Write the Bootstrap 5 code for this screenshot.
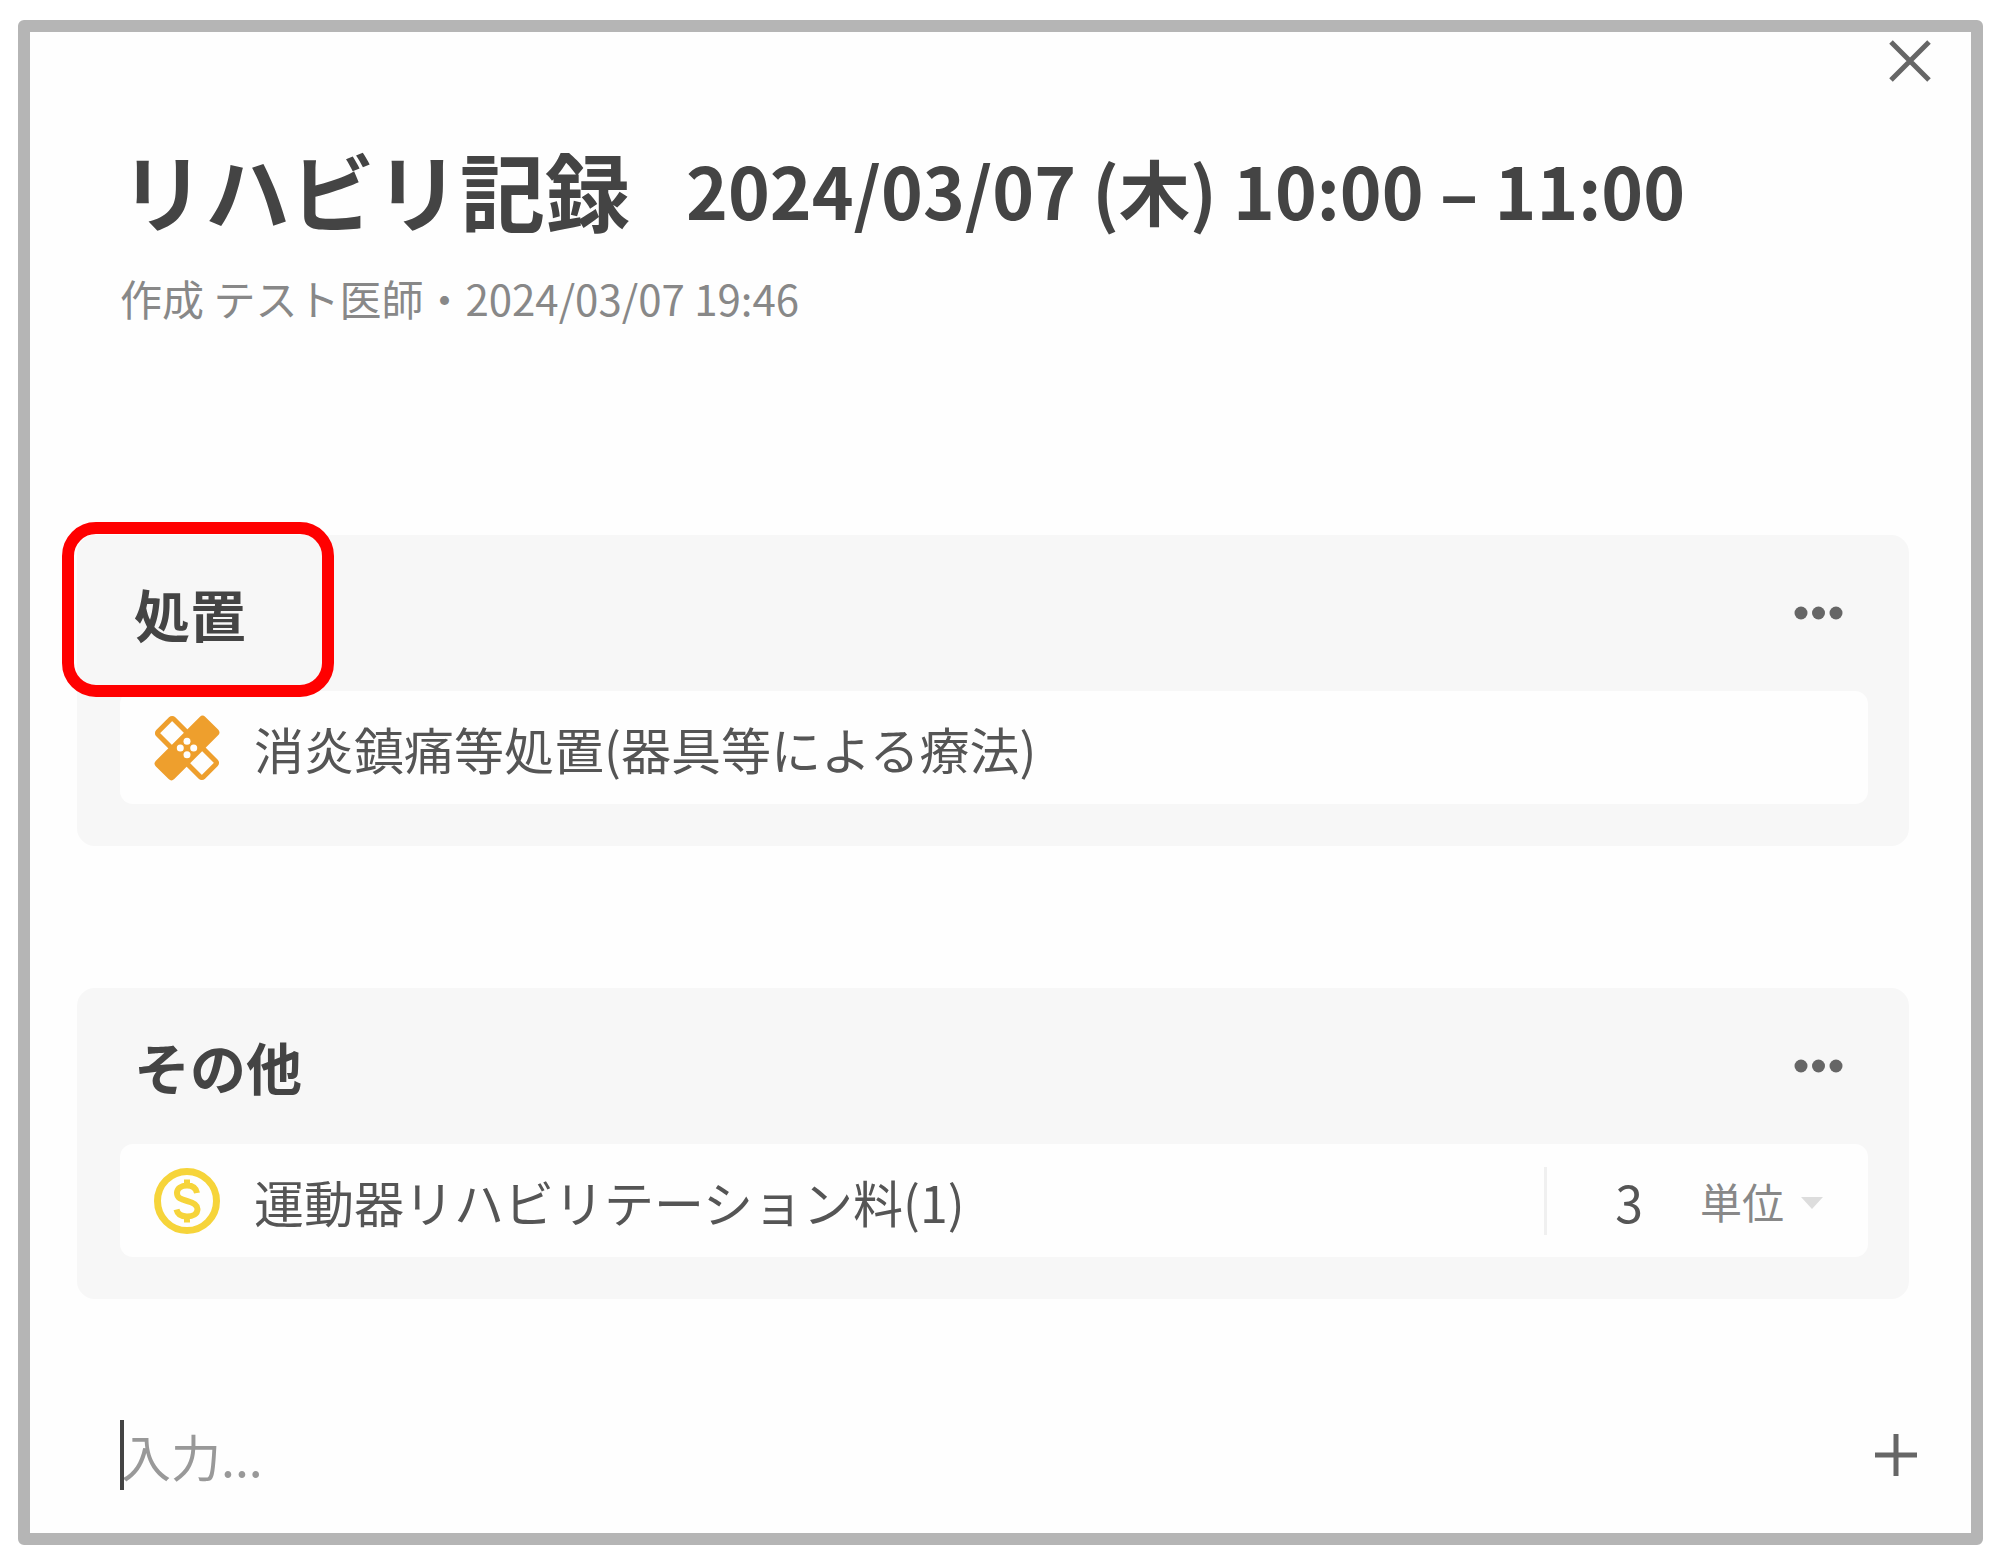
<!DOCTYPE html>
<html lang="ja">
<head>
<meta charset="utf-8">
<meta name="viewport" content="width=device-width, initial-scale=1">
<title>リハビリ記録</title>
<link href="https://cdn.jsdelivr.net/npm/bootstrap@5.3.0/dist/css/bootstrap.min.css" rel="stylesheet">
<style>
  body { font-family: "Noto Sans CJK JP", sans-serif; color: #444; background: #fff; padding: 20px 17px 18px 18px; }
  .record-frame { border: 12px solid #b5b5b5; border-radius: 6px; background: #fefefe; padding: 0 62px 43px 47px; }
  .icon-btn { border: 0; background: none; padding: 0; color: #666; line-height: 0; }
  .close-row { margin-right: -22px; padding-top: 8px; }
  .record-head { padding: 57px 0 0 43px; }
  .record-title { font-size: 85px; font-weight: 700; line-height: 100px; }
  .record-date { font-size: 71px; font-weight: 700; line-height: 100px; }
  .title-line { column-gap: 56px; }
  .record-meta { font-size: 42px; line-height: 60px; color: #888; margin-top: 29px; }
  .order-list { margin-top: 207px; gap: 142px; }
  .order-group { background: #f7f7f7; border-radius: 18px; padding: 0 41px 42px 43px; }
  .group-head { height: 156px; padding: 0 25px 0 14px; }
  .group-title { font-size: 56px; font-weight: 700; line-height: 80px; }
  .order-row { background: #fefefe; border-radius: 13px; min-height: 113px; padding: 0 45px 0 34px; gap: 34px; }
  .order-name { font-size: 50px; line-height: 72px; color: #555; }
  .callout-box { left: -15px; top: -13px; width: 272px; height: 175px; border: 12px solid #f00; border-radius: 34px; pointer-events: none; }
  .qty { border-left: 3px solid #f0f0f0; height: 68px; padding-left: 42px; }
  .qty-input { font-size: 50px; line-height: 68px; width: 80px; height: 68px; padding: 0; border: 0; background: none; color: #555; text-align: center; margin-right: 31px; outline: 0; }
  .qty-unit { font-size: 42px; line-height: 68px; width: 84px; height: 68px; padding: 0; border: 0; background: none; color: #888; appearance: none; outline: 0; }
  .qty-arrow { margin-left: 17px; pointer-events: none; }
  .entry-row { margin: 121px -8px 0 43px; }
  .entry-input { font-size: 50px; line-height: 70px; height: 70px; padding: 0; border: 0; border-left: 4px solid #444; background: none; color: #444; outline: 0; min-width: 0; text-indent: -3px; }
  .entry-input::placeholder { color: #999; opacity: 1; }
</style>
</head>
<body>
<main class="record-frame">
  <div class="close-row d-flex justify-content-end">
    <button type="button" class="icon-btn" aria-label="閉じる">
      <svg width="42" height="42" viewBox="0 0 42 42" fill="none" stroke="currentColor" stroke-width="5"><path d="M2 2 40 40M40 2 2 40"/></svg>
    </button>
  </div>

  <header class="record-head">
    <div class="title-line d-flex flex-wrap align-items-center">
      <h1 class="record-title m-0">リハビリ記録</h1>
      <span class="record-date">2024/03/07 (木) 10:00 – 11:00</span>
    </div>
    <p class="record-meta mb-0">作成 テスト医師・2024/03/07 19:46</p>
  </header>

  <div class="order-list d-flex flex-column">
    <section class="order-group position-relative">
      <div class="group-head d-flex align-items-center justify-content-between">
        <h2 class="group-title m-0">処置</h2>
        <button type="button" class="icon-btn" aria-label="処置のメニュー">
          <svg width="50" height="14" viewBox="0 0 50 14" fill="currentColor"><circle cx="8" cy="7" r="6.5"/><circle cx="25.500" cy="7" r="6.5"/><circle cx="43" cy="7" r="6.5"/></svg>
        </button>
      </div>
      <div class="order-row d-flex align-items-center">
        <svg class="flex-shrink-0" width="66" height="66" viewBox="0 0 66 66" aria-hidden="true">
          <g transform="translate(33 33) rotate(45)">
            <rect x="-32" y="-11" width="64" height="22" rx="2" fill="#fefefe" stroke="#ee9f2d" stroke-width="5"/>
            <rect x="-13" y="-35" width="26" height="70" rx="4" fill="#ee9f2d"/>
          </g>
          <g fill="#fefefe"><circle cx="33" cy="26.300" r="3.500"/><circle cx="26.300" cy="33" r="3.500"/><circle cx="39.700" cy="33" r="3.500"/><circle cx="33" cy="39.700" r="3.500"/></g>
        </svg>
        <span class="order-name">消炎鎮痛等処置(器具等による療法)</span>
      </div>
      <div class="callout-box position-absolute"></div>
    </section>

    <section class="order-group">
      <div class="group-head d-flex align-items-center justify-content-between">
        <h2 class="group-title m-0">その他</h2>
        <button type="button" class="icon-btn" aria-label="その他のメニュー">
          <svg width="50" height="14" viewBox="0 0 50 14" fill="currentColor"><circle cx="8" cy="7" r="6.5"/><circle cx="25.500" cy="7" r="6.5"/><circle cx="43" cy="7" r="6.5"/></svg>
        </button>
      </div>
      <div class="order-row d-flex align-items-center">
        <svg class="flex-shrink-0" width="66" height="66" viewBox="0 0 66 66" fill="none" stroke="#f6d43a" aria-hidden="true">
          <circle cx="33" cy="33" r="29.500" stroke-width="7"/>
          <path d="M43 25C42 20 38.500 17.500 33 17.500C27 17.500 23 20.500 23 25C23 30 27 31.500 33 33C39 34.500 43.500 36.500 43.500 41C43.500 46 39 48.500 33 48.500C27 48.500 23.500 46 22.500 41.500M33 11.500V17M33 49V54.500" stroke-width="6"/>
        </svg>
        <span class="order-name flex-grow-1">運動器リハビリテーション料(1)</span>
        <div class="qty d-flex align-items-center">
          <input class="qty-input" type="text" inputmode="numeric" value="3" aria-label="数量">
          <select class="qty-unit" aria-label="単位"><option>単位</option></select>
          <svg class="qty-arrow" width="22" height="16" viewBox="0 0 22 16" fill="#ddd" aria-hidden="true"><path d="M0 4H22L11 16Z"/></svg>
        </div>
      </div>
    </section>
  </div>

  <div class="entry-row d-flex align-items-center">
    <input class="entry-input flex-grow-1" type="text" placeholder="入力..." aria-label="入力">
    <button type="button" class="icon-btn" aria-label="追加">
      <svg width="42" height="42" viewBox="0 0 42 42" fill="none" stroke="currentColor" stroke-width="5"><path d="M0 21H42M21 0V42"/></svg>
    </button>
  </div>
</main>
<script src="https://cdn.jsdelivr.net/npm/bootstrap@5.3.0/dist/js/bootstrap.bundle.min.js"></script>
</body>
</html>
